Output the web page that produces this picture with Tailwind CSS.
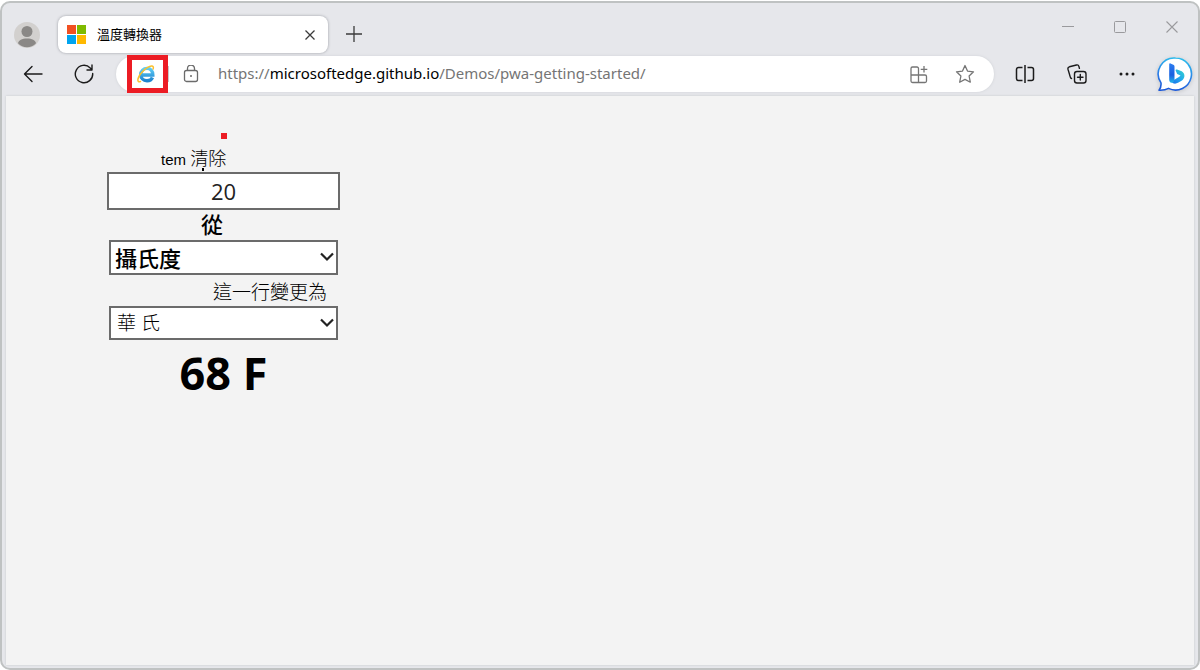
<!DOCTYPE html>
<html lang="zh-Hant">

<head>
    <meta charset="UTF-8">
    <meta name="viewport" content="width=device-width, initial-scale=1.0">
    <script src="https://cdn.jsdelivr.net/npm/@tailwindcss/browser@4"></script>
    <title>溫度轉換器</title>
</head>

<body class="bg-white pt-px font-['Open_Sans','Noto_Sans_CJK_TC',sans-serif] text-black">
    <div class="flex min-h-[calc(100vh-1px)] flex-col rounded-[10px] border-2 border-[#bfc2c2] bg-[#e6e7eb]">

        <!-- tab strip -->
        <header class="flex h-[50px] pl-3">
            <button class="mt-[19px] size-[26px] shrink-0 overflow-hidden rounded-full bg-[#d2d0ce]" aria-label="Profile">
                <svg class="size-full" viewBox="0 0 26 26" fill="#8a8886">
                    <circle cx="13" cy="9.500" r="5.500" />
                    <path d="M13 16.500c5 0 8.500 2 9 4.800a12 12 0 0 1-18 0c.5-2.800 4-4.800 9-4.800z" />
                </svg>
            </button>
            <div class="ml-[18px] mt-[13px] flex h-[37px] w-[270px] items-center rounded-lg bg-white px-2 shadow-[0_0_3px_#9a9da3]">
                <svg class="size-5 shrink-0" viewBox="0 0 20 20">
                    <path fill="#f25022" d="M1 0h9v9H1z" />
                    <path fill="#7fba00" d="M11 0h9v9h-9z" />
                    <path fill="#00a4ef" d="M1 10h9v9H1z" />
                    <path fill="#ffb900" d="M11 10h9v9h-9z" />
                </svg>
                <span class="ml-[11px] flex-1 text-[13px]">溫度轉換器</span>
                <button class="flex size-5 items-center justify-center" aria-label="Close tab">
                    <svg class="size-[10px]" viewBox="0 0 10 10" fill="none" stroke="#3b3b3b" stroke-width="1.300">
                        <path d="M.5.5l9 9M9.500.5l-9 9" />
                    </svg>
                </button>
            </div>
            <button class="ml-4 mt-[21px] flex size-5 items-center justify-center" aria-label="New tab">
                <svg class="size-4" viewBox="0 0 16 16" fill="none" stroke="#3b3b3b" stroke-width="1.300">
                    <path d="M8 0v16M0 8h16" />
                </svg>
            </button>
            <div class="ml-auto flex h-12">
                <button class="flex w-[52px] items-center justify-center" aria-label="Minimize">
                    <svg class="size-3" viewBox="0 0 12 12" stroke="#9a9a9d"><path d="M0 5.500h12" /></svg>
                </button>
                <button class="flex w-[52px] items-center justify-center" aria-label="Maximize">
                    <svg class="size-3" viewBox="0 0 12 12" fill="none" stroke="#9a9a9d"><rect x=".5" y=".5" width="11" height="11" rx="1" /></svg>
                </button>
                <button class="flex w-[52px] items-center justify-center" aria-label="Close">
                    <svg class="size-3" viewBox="0 0 12 12" stroke="#9a9a9d" stroke-width="1.100"><path d="M.5.5l11 11M11.500.5l-11 11" /></svg>
                </button>
            </div>
        </header>

        <!-- toolbar -->
        <nav class="mb-0.5 flex h-[41px] items-center pl-[21px] pr-[5px]">
            <button aria-label="Back">
                <svg class="size-5" viewBox="0 0 20 20" fill="none" stroke="#1b1b1b" stroke-width="1.400" stroke-linecap="round" stroke-linejoin="round">
                    <path d="M19 10H1.500M9 2.500L1.500 10 9 17.500" />
                </svg>
            </button>
            <button class="ml-[31px]" aria-label="Refresh">
                <svg class="size-5" viewBox="0 0 20 20" fill="none" stroke="#1b1b1b" stroke-width="1.400" stroke-linecap="round" stroke-linejoin="round">
                    <path d="M18.700 9.500a8.700 8.700 0 1 1-2.500-5.600l1.600 1.800M18 1v5h-5" />
                </svg>
            </button>
            <div class="ml-[22px] flex h-9 flex-1 items-center rounded-full bg-white pl-[11px] pr-[19px] shadow-[0_0_3px_#cfd1d6]">
                <button class="flex h-[38px] w-[41px] shrink-0 items-center border-5 border-[#ec1c24] bg-white pl-[5px]" aria-label="Internet Explorer mode">
                    <svg class="size-[18px]" viewBox="0 0 18 18" fill="none">
                        <defs>
                            <linearGradient id="ie" x1="0" y1="0" x2="0" y2="1">
                                <stop offset="0" stop-color="#5fcdf5" />
                                <stop offset="1" stop-color="#1e83cf" />
                            </linearGradient>
                        </defs>
                        <path d="M5 10h10.800C15.800 5.600 13.500 3.400 10 3.400S3.800 6 3.800 9.500s2.400 6.200 6.200 6.200c2.600 0 4.600-1.200 5.500-3.200" stroke="url(#ie)" stroke-width="3.400" />
                        <path d="M3.500 16.500C1.500 17.200.5 16.300 1 14 2.200 9 9.500 1.500 14.500 1c1.800-.1 2.200 1.100 1.600 2.900" stroke="#fbc02d" stroke-width="1.500" stroke-linecap="round" />
                    </svg>
                </button>
                <span class="h-4 w-px bg-[#c8c8c8]"></span>
                <svg class="ml-[13px] size-[18px] shrink-0" viewBox="0 0 18 18" fill="none" stroke="#6b6b6b" stroke-width="1.300">
                    <rect x="2.500" y="5.500" width="13" height="11" rx="2" />
                    <path d="M5.500 5.500V3.500a3.500 3.500 0 0 1 7 0v2" />
                    <circle cx="9" cy="11" r="1" fill="#6b6b6b" stroke="none" />
                </svg>
                <div class="ml-[18px] flex-1 whitespace-nowrap font-['Noto_Sans',sans-serif] text-[15px] text-[#757575] outline-none" role="textbox" contenteditable="true" spellcheck="false" aria-label="Address">https://<span class="text-black">microsoftedge.github.io</span>/Demos/pwa-getting-started/</div>
                <button aria-label="Install app">
                    <svg class="size-5" viewBox="0 0 20 20" fill="none" stroke="#757575" stroke-width="1.300">
                        <path d="M9.500 18.500v-14a1.500 1.500 0 0 0-1.500-1.500H3.500A1.500 1.500 0 0 0 2 4.500V17A1.500 1.500 0 0 0 3.500 18.500h12.500a1.500 1.500 0 0 0 1.500-1.500v-4.500a1.500 1.500 0 0 0-1.500-1.500H2M15 2v6.500M11.700 5.300h6.600" />
                    </svg>
                </button>
                <button class="ml-[26px]" aria-label="Add to favorites">
                    <svg class="size-5" viewBox="0 0 20 20" fill="none" stroke="#757575" stroke-width="1.300" stroke-linejoin="round">
                        <path d="M10 1.500l2.500 5.600 6 .7-4.400 4.200 1.200 6.200L10 15.400l-5.300 2.800 1.200-6.200L1.500 7.800l6-.7z" />
                    </svg>
                </button>
            </div>
            <button class="ml-[21px]" aria-label="Split screen">
                <svg class="size-5" viewBox="0 0 20 20" fill="none" stroke="#1b1b1b" stroke-width="1.500">
                    <path d="M7.500 3.500H3.500a2 2 0 0 0-2 2v9a2 2 0 0 0 2 2h4M12.500 3.500h4a2 2 0 0 1 2 2v9a2 2 0 0 1-2 2h-4M10 1v18" />
                </svg>
            </button>
            <button class="ml-8" aria-label="Collections">
                <svg class="size-5" viewBox="0 0 20 20" fill="none" stroke="#1b1b1b" stroke-width="1.400" stroke-linecap="round">
                    <rect x="7.500" y="7.500" width="11.500" height="11.500" rx="2.500" />
                    <path d="M13.300 10.500v5.500M10.500 13.300H16M4.500 14.500a2 2 0 0 1-1.200-1.400L1 5.200a2 2 0 0 1 1.400-2.400L9.500 1a2 2 0 0 1 2.400 1.400l.5 2" />
                </svg>
            </button>
            <button class="ml-[30px]" aria-label="Settings and more">
                <svg class="size-5" viewBox="0 0 20 20" fill="#1b1b1b">
                    <circle cx="4" cy="10" r="1.500" />
                    <circle cx="10" cy="10" r="1.500" />
                    <circle cx="16" cy="10" r="1.500" />
                </svg>
            </button>
            <button class="ml-5 drop-shadow-sm" aria-label="Bing">
                <svg class="size-9" viewBox="0 0 36 36">
                    <defs>
                        <linearGradient id="ring" x1=".6" y1="0" x2=".4" y2="1">
                            <stop offset="0" stop-color="#2bbcec" />
                            <stop offset=".6" stop-color="#2a7be8" />
                            <stop offset="1" stop-color="#1b58d8" />
                        </linearGradient>
                        <linearGradient id="stem" x1="0" y1="0" x2="0" y2="1">
                            <stop offset="0" stop-color="#2d7df0" />
                            <stop offset=".6" stop-color="#1a5fe0" />
                            <stop offset="1" stop-color="#22b5ea" />
                        </linearGradient>
                        <linearGradient id="bowl" x1="1" y1="0" x2="0" y2="1">
                            <stop offset="0" stop-color="#37d3c8" />
                            <stop offset=".5" stop-color="#21a8ee" />
                            <stop offset="1" stop-color="#1f6de8" />
                        </linearGradient>
                    </defs>
                    <path d="M18.500 2a16 16 0 1 1-7 30.400c-2.500 1.400-5.500 2-9.500 1.800 1.800-2.200 2.300-4.300 2-7.300A16 16 0 0 1 18.500 2z" fill="#fff" stroke="url(#ring)" stroke-width="1.600" stroke-linejoin="round" />
                    <path d="M20 13.500c-1-.4-1.700.3-1.300 1.200l1.500 3.400 3.300 1.500c-.5 1.500-6.500 4-9.200 6.200 2 2.300 4.500 2.200 6.700 1l4-2.400c3.400-2.200 3.300-7-.3-9.100z" fill="url(#bowl)" />
                    <path d="M12.200 8.200c0-.8.700-1 1.300-.7l2.800 1.200c.8.400 1.200 1 1.200 2v12.800c0 2-1.500 3.500-3 3.200-1.500-.2-2.300-1.400-2.300-3z" fill="url(#stem)" />
                </svg>
            </button>
        </nav>

        <!-- page -->
        <main class="mx-1 mb-[3px] flex-1 bg-[#f3f3f3] shadow-[0_0_2px_#c4c6c9]">
            <form class="ml-[101px] mt-[37px] flex w-[233px] flex-col items-center">
                <span class="size-[6px] bg-[#ec1c24]"></span>
                <label for="input-temp" class="relative mt-2 w-full pl-[54px] font-['Liberation_Sans','Noto_Sans_CJK_TC',sans-serif] text-[15px] leading-6">
                    tem <span class="text-lg leading-6 font-light">清除</span>
                    <span class="absolute left-[95px] top-[21px] h-[3px] w-[2px] bg-black"></span>
                </label>
                <input id="input-temp" type="text" inputmode="decimal" value="20" class="h-[38px] w-full border-2 border-[#6b6b6b] bg-white text-center text-[22px] text-[#222]">
                <label for="input-unit" class="w-full pb-0.5 pl-[94px] text-[22px] leading-7 font-medium">從</label>
                <div class="relative w-[229px]">
                    <select id="input-unit" class="h-[35px] w-full appearance-none border-2 border-[#6b6b6b] bg-white pb-0.5 pl-1 text-[22px] font-medium">
                        <option>攝氏度</option>
                        <option>華氏</option>
                    </select>
                    <svg class="pointer-events-none absolute right-1 top-3 h-[10px] w-[14px]" viewBox="0 0 14 10" fill="none" stroke="#222" stroke-width="2.200"><path d="M1 1.500l6 6 6-6" /></svg>
                </div>
                <label for="output-unit" class="w-full pt-1 pl-[106px] text-[19px] leading-[27px] font-light">這一行變更為</label>
                <div class="relative w-[229px]">
                    <select id="output-unit" class="h-[34px] w-full appearance-none border-2 border-[#6b6b6b] bg-white pl-1.5 text-[19px] font-light">
                        <option>華 氏</option>
                        <option>攝氏度</option>
                    </select>
                    <svg class="pointer-events-none absolute right-1 top-3 h-[10px] w-[14px]" viewBox="0 0 14 10" fill="none" stroke="#222" stroke-width="2.200"><path d="M1 1.500l6 6 6-6" /></svg>
                </div>
                <output for="input-temp input-unit output-unit" class="mt-1 text-[45px] leading-[58px] font-bold">68 F</output>
            </form>
        </main>
    </div>
</body>

</html>
